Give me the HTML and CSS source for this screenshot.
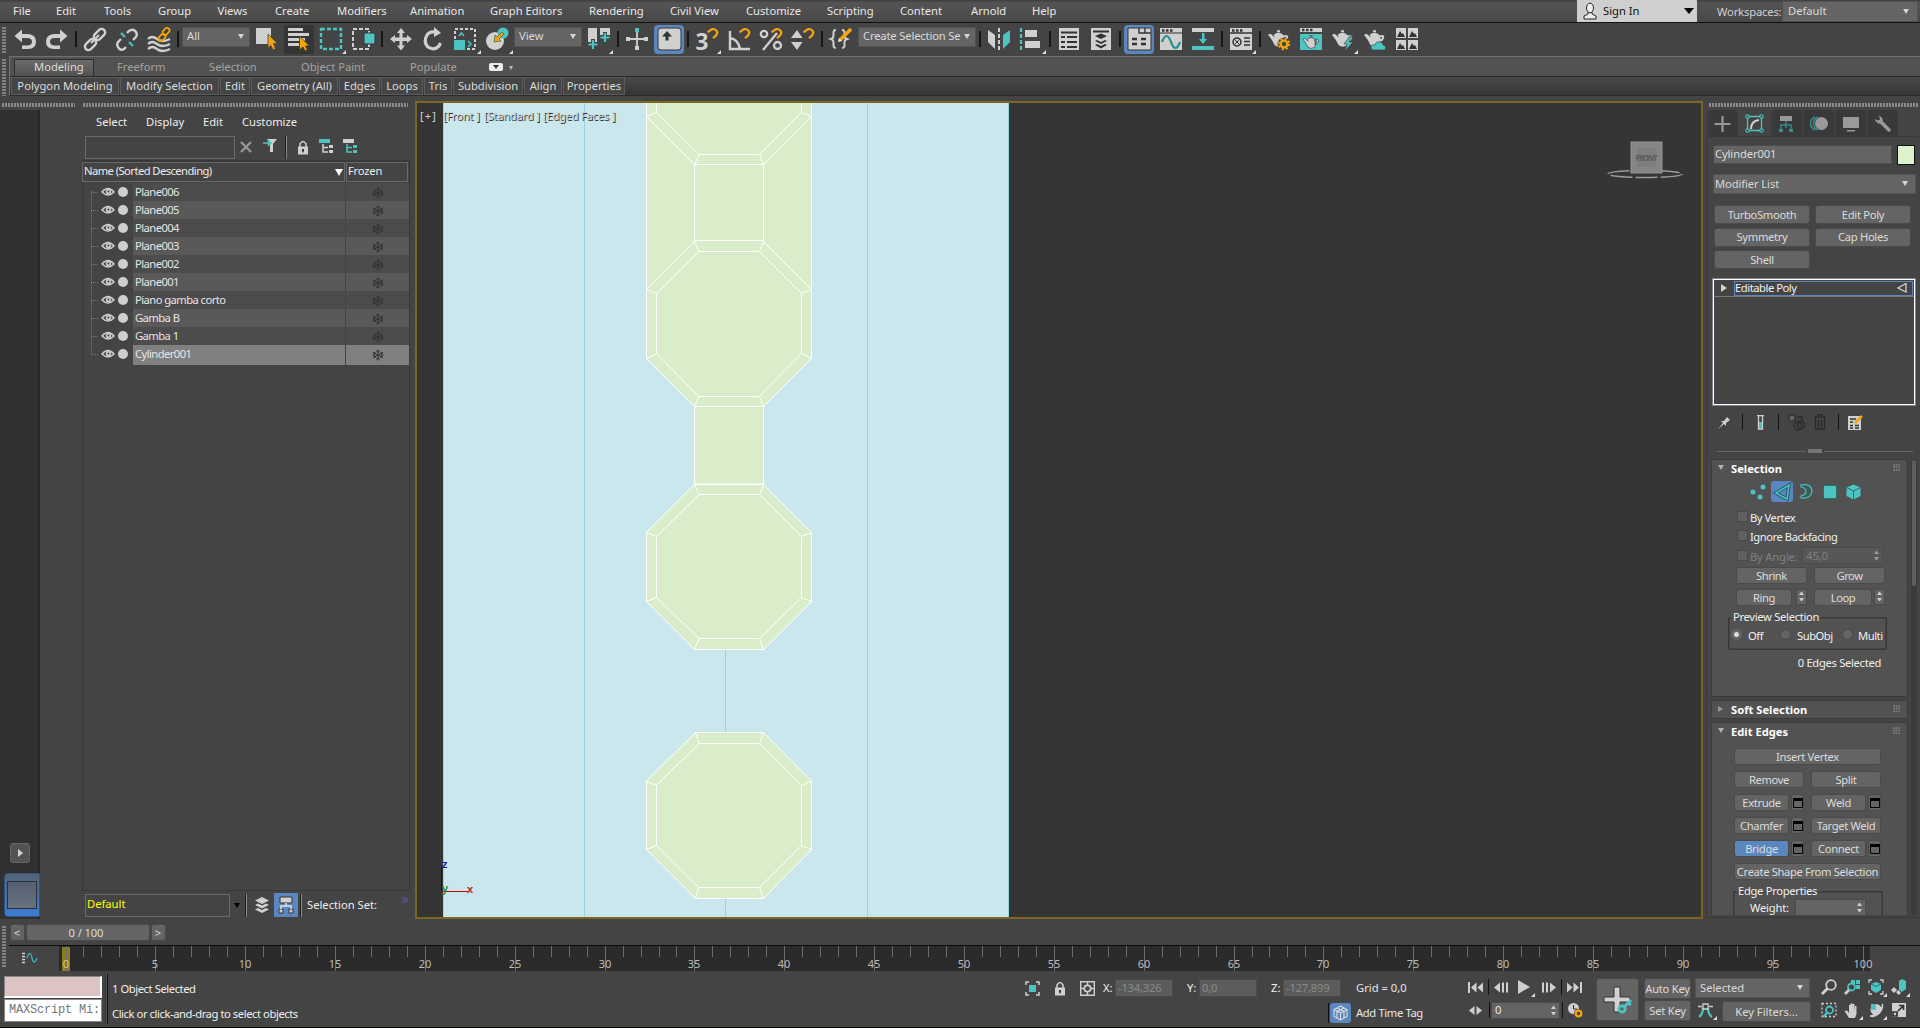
FILE: index.html
```html
<!DOCTYPE html>
<html lang="en">
<head>
<meta charset="utf-8">
<title>3D Modeling</title>
<link rel="stylesheet" href="styles.css">
</head>
<body>
<svg class="defs" width="0" height="0">
  <defs>
    <symbol id="eye" viewBox="0 0 14 10"><path d="M1 5Q7-2 13 5Q7 11 1 5Z" fill="none" stroke="#cfcfcf" stroke-width="1.5"/><circle cx="7.5" cy="4.8" r="2.7" fill="#cfcfcf"/><circle cx="7.5" cy="4.5" r="1.1" fill="#444"/></symbol>
    <symbol id="flake" viewBox="0 0 12 12"><path d="M6 .5V11.5M1 3.2L11 8.8M1 8.8L11 3.2M4 1.5L6 3.2L8 1.5M4 10.5L6 8.8L8 10.5M.8 5.3H3L3 3M11.200 5.300H9V3M.8 6.800H3V9M11.200 6.800H9V9" fill="none" stroke="#333" stroke-width="1"/></symbol>
    <symbol id="magnet" viewBox="0 0 12 12"><path d="M1.500 4.500L4 2.500C8-.5 12.500 4 9 7.500L6.500 10" fill="none" stroke="#f5a50c" stroke-width="2"/></symbol>
    <symbol id="pot" viewBox="0 0 24 24"><path d="M7 8Q12 4 17 8Q20 13 17 19Q12 22 8 19Q6 14 1 8L4 7L8 11ZM10.500 3.500h3v2h-3zM17 9Q23 7 22 12Q20 16 17 15V13Q20 13 20 10.500Q19 10 17 11Z" fill="#d0d0d0"/></symbol>
    <symbol id="lock" viewBox="0 0 10 15"><path d="M2 7V4Q5-1 8 4V7" fill="none" stroke="#cfcfcf" stroke-width="1.500"/><path d="M0 6.500H10V14.500H0Z" fill="#cfcfcf"/><path d="M4 9h2v1.500l-.5 2h-1l-.5-2z" fill="#333"/></symbol>
    <symbol id="win" viewBox="0 0 12 12"><path d="M1.500 1.500h9v9h-9z" fill="none" stroke="#000"/><path d="M1 1h10v3H1z"/></symbol>
  </defs>
</svg>

<header class="menubar">
  <nav class="menus"><span>File</span><span>Edit</span><span>Tools</span><span>Group</span><span>Views</span><span>Create</span><span>Modifiers</span><span>Animation</span><span>Graph Editors</span><span>Rendering</span><span>Civil View</span><span>Customize</span><span>Scripting</span><span>Content</span><span>Arnold</span><span>Help</span></nav>
  <div class="signin"><svg width="16" height="18" viewBox="0 0 16 18"><path d="M6 10V12L2 14V17H14V14L10 12V10Z" fill="#eee" stroke="#222"/><ellipse cx="8" cy="6" rx="3.500" ry="4.800" fill="#eee" stroke="#222"/></svg><span>Sign In</span><i class="down black"></i></div>
  <span class="ws-label">Workspaces:</span>
  <div class="dd ws">Default<i class="down"></i></div>
</header>

<div class="toolbar">
  <i class="vgrip"></i>
  <svg class="tool" viewBox="0 0 32 32"><path d="M5.500 12L13 5.500V10H19Q27 10.500 27 17.500Q27 25 19 25H13V21.500H18Q23 21.500 23 17.500Q23 14 18 14H13V18.500Z" fill="#d0d0d0"/></svg>
  <svg class="tool" viewBox="0 0 32 32"><path d="M26.500 12L19 5.500V10H13Q5 10.500 5 17.500Q5 25 13 25H19V21.500H14Q9 21.500 9 17.500Q9 14 14 14H19V18.500Z" fill="#d0d0d0"/></svg>
  <i class="sep"></i>
  <svg class="tool" viewBox="0 0 32 32"><g fill="none" stroke="#d0d0d0" stroke-width="2.400"><rect x="14" y="7" width="13" height="7" rx="3.500" transform="rotate(-45 20.500 10.500)"/><rect x="5" y="17" width="13" height="7" rx="3.500" transform="rotate(-45 11.500 20.500)"/></g><path d="M12 19L20 11" stroke="#d0d0d0" stroke-width="2.200"/></svg>
  <svg class="tool" viewBox="0 0 32 32"><g fill="none" stroke="#d0d0d0" stroke-width="2.400"><path d="M16 9L18 7Q22 4 25 8Q27 11 24 14L22 16M15 23L13 25Q9 27 7 23Q5 20 8 17L10 15"/></g><path d="M10 9L14 13M18 18L22 22" stroke="#4bc4c2" stroke-width="2.200"/></svg>
  <svg class="tool" viewBox="0 0 32 32"><path d="M5 15Q9 11 14 15T27 15M5 20Q9 16 14 20T27 20M5 25Q9 21 14 25T27 25" fill="none" stroke="#d0d0d0" stroke-width="2.300"/><g fill="none" stroke="#f5a50c" stroke-width="1.700"><rect x="19" y="5" width="8" height="5" rx="2.500" transform="rotate(-45 23 7.500)"/><rect x="15" y="11" width="8" height="5" rx="2.500" transform="rotate(-45 19 13.500)"/></g></svg>
  <i class="sep"></i>
  <div class="dd all">All<i class="down"></i></div>
  <svg class="tool" viewBox="0 0 32 32"><path d="M5 4H20V20H5Z" fill="#d0d0d0"/><path d="M17 10L26.500 19.500H22.500L24.500 24.500L22 26L20 21.500L17 24Z" fill="#f5a50c" stroke="#444" stroke-width=".8"/></svg>
  <svg class="tool pressed" viewBox="0 0 32 32"><path d="M5 4H20V7H5ZM5 9H26V12H5ZM5 14H22V17H5ZM5 19H17V22H5Z" fill="#d0d0d0"/><path d="M16.500 12L26.500 22H22.500L24.500 26L22 27L20 23L16.500 26Z" fill="#f5a50c" stroke="#353535" stroke-width=".8"/></svg>
  <svg class="tool" viewBox="0 0 32 32"><rect x="6" y="5" width="20" height="20" fill="none" stroke="#4bc4c2" stroke-width="2.400" stroke-dasharray="4 2"/><path d="M31 26V30H27Z" fill="#ddd"/></svg>
  <svg class="tool" viewBox="0 0 32 32"><rect x="6" y="5" width="16" height="20" fill="none" stroke="#d0d0d0" stroke-width="2" stroke-dasharray="4 2"/><path d="M17 9H28V20H17Z" fill="#4bc4c2" stroke="#333"/></svg>
  <i class="sep"></i>
  <svg class="tool" viewBox="0 0 32 32"><path d="M16 4L20 9H17.500V13.500H22V11L27 15L22 19V17H17.500V21.500H20L16 26.500L12 21.500H14.500V17H10V19L5 15L10 11V13.500H14.500V9H12Z" fill="#d0d0d0"/></svg>
  <svg class="tool" viewBox="0 0 32 32"><path d="M20 9Q14 6 10 11Q6 18 11 23Q17 27 22 22L23.500 19" fill="none" stroke="#d0d0d0" stroke-width="3.200"/><path d="M17 3L24 9L17 13Z" fill="#d0d0d0"/></svg>
  <svg class="tool" viewBox="0 0 32 32"><rect x="6" y="5" width="20" height="20" fill="none" stroke="#d0d0d0" stroke-width="2" stroke-dasharray="3 2"/><path d="M5 16H16V26H5Z" fill="#4bc4c2"/><path d="M10 12L12.500 9L15 12M19 17L22 20L19 23" fill="none" stroke="#4bc4c2" stroke-width="1.600"/><path d="M32 26V30H28Z" fill="#ddd"/></svg>
  <svg class="tool" viewBox="0 0 32 32"><ellipse cx="14" cy="17" rx="9" ry="9" fill="#d0d0d0"/><circle cx="22" cy="9" r="5.500" fill="#4bc4c2"/><path d="M21 8L23 10L18 15L20 17L13 18L14 11L16 13Z" fill="#f5a50c" stroke="#444" stroke-width=".6"/><path d="M32 26V30H28Z" fill="#ddd"/></svg>
  <div class="dd view">View<i class="down"></i></div>
  <svg class="tool" viewBox="0 0 32 32"><path d="M5 4H14V18H5ZM17 4H27V12H17Z" fill="#d0d0d0"/><path d="M10 15V25M5 20H15M22 8V18M17 13H27" stroke="#444" stroke-width="4"/><path d="M10 16V25M5.500 20.500H14.500M22 9V18M17.500 13.500H26.500" stroke="#4bc4c2" stroke-width="2.200"/><path d="M30 26V30H26Z" fill="#ddd"/></svg>
  <i class="sep"></i>
  <svg class="tool" viewBox="0 0 32 32"><path d="M16 8V26M5 15H27" stroke="#d0d0d0" stroke-width="1.800"/><path d="M5 13h4v4H5zM23 13h4v4h-4zM14 22h4v4h-4z" fill="#d0d0d0"/><path d="M14 4h4v4h-4z" fill="#4bc4c2"/></svg>
  <svg class="tool active" viewBox="1 1 30 29"><rect x="5" y="4" width="23" height="22" rx="3" fill="#d0d0d0" stroke="#333"/><path d="M14 7L19 12.500H15.500V16.500H12.500V12.500H9Z" fill="#333"/></svg>
  <i class="sep"></i>
  <svg class="tool" viewBox="0 0 32 32"><text x="4.500" y="26" font-size="24" font-weight="700" fill="#d0d0d0" textLength="13" lengthAdjust="spacingAndGlyphs">3</text><use href="#magnet" x="15" y="3" width="13" height="14"/><path d="M30 26V30H26Z" fill="#ddd"/></svg>
  <svg class="tool" viewBox="0 0 32 32"><path d="M7 7V25H27M7 14Q15 15 17 25" fill="none" stroke="#d0d0d0" stroke-width="2.400"/><use href="#magnet" x="15" y="3" width="13" height="14"/></svg>
  <svg class="tool" viewBox="0 0 32 32"><g fill="none" stroke="#d0d0d0" stroke-width="2.300"><circle cx="9" cy="10" r="3.200"/><circle cx="22.500" cy="21.500" r="3.500"/><path d="M8 26L22 9"/></g><use href="#magnet" x="15" y="3" width="13" height="14"/></svg>
  <svg class="tool" viewBox="0 0 32 32"><path d="M4 14L10 6L15.500 14ZM4 18H15.500L10 26Z" fill="#d0d0d0"/><use href="#magnet" x="15" y="3" width="13" height="14"/></svg>
  <i class="sep"></i>
  <svg class="tool" viewBox="0 0 32 32"><path d="M11 6Q8 6 8.500 10Q9 14 6 15Q9 16 8.500 20Q8 24 11 24M17 6Q20 6 19.500 10Q19 14 22 15Q19 16 19.500 20Q20 24 17 24" fill="none" stroke="#d0d0d0" stroke-width="2"/><path d="M15 16L26 5" stroke="#f5a50c" stroke-width="3.500"/><path d="M13 18L17 17L14 14Z" fill="#eee"/></svg>
  <div class="dd sel">Create Selection Se<i class="down"></i></div>
  <i class="sep"></i>
  <svg class="tool" viewBox="0 0 32 32"><path d="M5 6L12 11V25L5 18Z" fill="#d0d0d0"/><path d="M27 6L20 11V25L27 18Z" fill="#4bc4c2"/><path d="M16 4V27" stroke="#d0d0d0" stroke-width="2" stroke-dasharray="4 2"/></svg>
  <svg class="tool" viewBox="0 0 32 32"><path d="M6 4V27" stroke="#4bc4c2" stroke-width="2.200" stroke-dasharray="4 2"/><path d="M10 6H22V13H10ZM10 17H25V24H10Z" fill="#d0d0d0"/><path d="M31 26V30H27Z" fill="#ddd"/></svg>
  <i class="sep"></i>
  <svg class="tool" viewBox="0 0 32 32"><path d="M6 4H26V26H6Z" fill="#d0d0d0"/><path d="M8 8.500H24M8 13H12M14 13H24M8 18H12M14 18H24M8 23H12M14 23H24" stroke="#333" stroke-width="2"/></svg>
  <svg class="tool" viewBox="0 0 32 32"><path d="M6 4H26V26H6Z" fill="#d0d0d0"/><path d="M8 7.500H24" stroke="#333" stroke-width="2"/><path d="M10 12L16 9.500L22 12L16 15ZM10 17L12 16L16 18L20 16L22 17L16 20ZM10 21L12 20L16 22L20 20L22 21L16 24.500Z" fill="#333"/></svg>
  <i class="sep"></i>
  <svg class="tool active" viewBox="1 1 30 29"><path d="M5 4H28V26H5Z" fill="#d0d0d0" stroke="#333"/><path d="M16 4V9H28M22 4V9" fill="none" stroke="#333" stroke-width="1.400"/><path d="M9 15H14M18 15H23M9 20H14M18 20H23" fill="none" stroke="#333" stroke-width="2.600"/></svg>
  <svg class="tool" viewBox="0 0 32 32"><path d="M5 4H27V26H5Z" fill="#d0d0d0"/><path d="M5 9H27" stroke="#333"/><path d="M7 6.500h2.500M11 6.500h2.500M15 6.500h2.500" stroke="#333" stroke-width="2.500"/><path d="M7 18C10 10 13 10 16 18S22 26 25 18" fill="none" stroke="#278f8e" stroke-width="2.200"/></svg>
  <svg class="tool" viewBox="0 0 32 32"><path d="M5 4H27V8H5Z" fill="#d0d0d0"/><path d="M5 22H27V26H5ZM15 9H17.500V15H20L16 20L12 15H15Z" fill="#4bc4c2"/></svg>
  <i class="sep"></i>
  <svg class="tool" viewBox="0 0 32 32"><path d="M5 4H27V26H5Z" fill="#d0d0d0"/><path d="M5 9H27M19 14H25M19 17.500H25M19 21H25" stroke="#333" stroke-width="1.300"/><path d="M7 6.500h2.500M11 6.500h2.500M15 6.500h2.500" stroke="#333" stroke-width="2.500"/><circle cx="12" cy="18" r="4" fill="#ccc" stroke="#333" stroke-width="1.500"/><path d="M9 15L15 21M15 15L9 21" stroke="#333"/><path d="M31 26V30H27Z" fill="#ddd"/></svg>
  <i class="sep"></i>
  <svg class="tool" viewBox="0 0 32 32"><use href="#pot" x="4" y="3" width="23" height="23"/><circle cx="21" cy="20" r="6.500" fill="#444"/><circle cx="21" cy="20" r="3.400" fill="none" stroke="#f5a50c" stroke-width="2.400"/><circle cx="21" cy="20" r="5.200" fill="none" stroke="#f5a50c" stroke-width="2" stroke-dasharray="2 2.080"/></svg>
  <svg class="tool" viewBox="0 0 32 32"><path d="M5 4H27V8H5Z" fill="#d0d0d0"/><path d="M5 10H27V26H5Z" fill="#4bc4c2"/><path d="M7 6h2.500M11 6h2.500M15 6h2.500" stroke="#333" stroke-width="2.500"/><g stroke="#333" stroke-width=".8"><use href="#pot" x="6" y="9" width="20" height="18"/></g></svg>
  <svg class="tool" viewBox="0 0 32 32"><use href="#pot" x="4" y="3" width="23" height="23"/><path d="M23 12L17 20H20L18 27L26 18H22L25 12Z" fill="#4bc4c2" stroke="#444" stroke-width=".7"/><path d="M31 26V30H27Z" fill="#ddd"/></svg>
  <svg class="tool" viewBox="0 0 32 32"><use href="#pot" x="4" y="3" width="23" height="23"/><path d="M14 26Q11 25 12 22Q14 20 16 21Q17 17 21 18Q24 18 24 21Q28 22 26 26Z" fill="#4bc4c2" stroke="#444" stroke-width=".7"/></svg>
  <svg class="tool" viewBox="0 0 32 32"><path d="M5 4H15V14H5ZM17 4H27V14H17ZM5 16H15V26H5ZM17 16H27V26H17Z" fill="#d0d0d0"/><path d="M6 13L9 7L11 10L12 9L14 13ZM18 13L21 7L23 10L24 9L26 13ZM6 25L9 19L11 22L12 21L14 25ZM18 25L21 19L23 22L24 21L26 25Z" fill="#333"/></svg>
</div>

<div class="ribbon">
  <i class="vgrip"></i>
  <div class="ribbon-body">
    <div class="tabs"><span class="on">Modeling</span><span>Freeform</span><span>Selection</span><span>Object Paint</span><span>Populate</span><b class="pill"><i class="down"></i></b><i class="down sm"></i></div>
    <div class="panels"><span>Polygon Modeling</span><span>Modify Selection</span><span>Edit</span><span>Geometry (All)</span><span>Edges</span><span>Loops</span><span>Tris</span><span>Subdivision</span><span>Align</span><span>Properties</span></div>
  </div>
</div>

<main class="main">
  <aside class="strip">
    <i class="hgrip"></i>
    <div class="strip-body">
      <b class="strip-play"><i class="right"></i></b>
      <div class="strip-tab"><i></i></div>
    </div>
  </aside>

  <section class="explorer">
    <i class="hgrip"></i>
    <nav class="ex-menu"><span>Select</span><span>Display</span><span>Edit</span><span>Customize</span></nav>
    <div class="ex-tools">
      <div class="search"></div>
      <svg width="12" height="12" viewBox="0 0 12 12"><path d="M1 1L11 11M11 1L1 11" stroke="#999" stroke-width="2.200"/></svg>
      <svg class="filter" width="15" height="15" viewBox="0 0 15 15"><path d="M4 1H14L10 6V14H7V6Z" fill="#cfcfcf"/><path d="M0 5H8M5 2.500L8 5L5 7.500" fill="none" stroke="#4bc4c2" stroke-width="1.700"/></svg>
      <i class="line"></i>
      <svg width="10" height="15"><use href="#lock"/></svg>
      <svg class="tree" width="15" height="15" viewBox="0 0 15 15"><path d="M0 0H11V4H0Z" fill="#4bc4c2"/><path d="M4 5V13H9M4 8.500H9" fill="none" stroke="#cfcfcf" stroke-width="1.500"/><path d="M10 6h4v3h-4zM10 11h4v3h-4z" fill="#cfcfcf"/></svg>
      <svg class="tree" width="15" height="15" viewBox="0 0 15 15"><path d="M0 0H11V4H0Z" fill="#cfcfcf"/><path d="M4 5V13H9M4 8.500H9" fill="none" stroke="#4bc4c2" stroke-width="1.500"/><path d="M10 6h4v3h-4zM10 11h4v3h-4z" fill="#4bc4c2"/></svg>
    </div>
    <div class="ex-list">
      <div class="ex-head"><span>Name (Sorted Descending)<i class="down white"></i></span><span>Frozen</span></div>
      <div class="ex-rows" id="rows"></div>
    </div>
    <div class="ex-foot">
      <div class="combo">Default</div><i class="down black"></i><i class="line"></i>
      <svg width="14" height="16" viewBox="0 0 14 16"><path d="M0 3.500L7 0L14 3.500L7 7ZM0 8L3 6.500L7 8.500L11 6.500L14 8L7 11.500ZM0 12.500L3 11L7 13L11 11L14 12.500L7 16Z" fill="#cfcfcf"/></svg>
      <svg class="hier" width="24" height="24" viewBox="0 0 24 24"><path d="M6 4H18V10H6ZM5 16h4v4H5zM15 16h4v4h-4z" fill="#d0d0d0" stroke="#333"/><path d="M12 10V13M7 16V13H17V16" fill="none" stroke="#e4e4e4" stroke-width="1.500"/></svg>
      <i class="line"></i><span>Selection Set:</span><em>»</em>
    </div>
  </section>

  <section class="viewport">
    <svg class="scene" viewBox="417 103 1284 814" width="1284" height="814">
      <rect x="443" y="103" width="566" height="814" fill="#c9e7ec"/>
      <path d="M443.500 103V917M584.500 103V917M725.500 640V917M867.500 103V917M1008.500 103V917" stroke="#93d5e4" fill="none"/>
      <g fill="#d9edcb" stroke="#fff" stroke-linejoin="round">
        <path d="M646.500 100V358.500L694.500 406.500H763.500L811.500 358.500V100Z"/>
        <path d="M694.500 406.500H763.500V484H694.500Z"/>
        <path fill="none" d="M646.500 116.500L694.500 164.500H763.500L811.500 116.500M656.500 100V112.500L699 154.500H759.500L801.500 112.500V100M646.500 116.500L656.500 112.500M811.500 116.500L801.500 112.500M694.500 164.500L699 154.500M763.500 164.500L759.500 154.500M694.500 164.500V241.500M763.500 164.500V241.500M646.500 289.500L694.500 241.500M763.500 241.500L811.500 289.500M694.500 240.500H763.500"/>
        <path fill="none" d="M699 251.500H759.500L801.500 293.500V353.500L759.500 396.500H699L656.500 353.500V293.500ZM694.500 241.500L699 251.500M763.500 241.500L759.500 251.500M811.500 289.500L801.500 293.500M811.500 358.500L801.500 353.500M763.500 406.500L759.500 396.500M694.500 406.500L699 396.500M646.500 358.500L656.500 353.500M646.500 289.500L656.500 293.500"/>
        <path d="M694.500 484.500H763.500L811.500 532.500V601.500L763.500 649.500H694.500L646.500 601.500V532.500Z"/>
        <path d="M699 494.500H759.500L801.500 536.500V597.500L759.500 638.500H699L656.500 597.500V536.500ZM694.500 484.500L699 494.500M763.500 484.500L759.500 494.500M811.500 532.500L801.500 536.500M811.500 601.500L801.500 597.500M763.500 649.500L759.500 638.500M694.500 649.500L699 638.500M646.500 601.500L656.500 597.500M646.500 532.500L656.500 536.500"/>
        <path d="M695.500 732.500H763.500L811.500 781V849.500L763.500 898.500H695.500L646.500 849.500V781Z"/>
        <path d="M699 743.500H759.500L801.500 785.500V845.500L759.500 887.500H699L656.500 845.500V785.500ZM695.500 732.500L699 743.500M763.500 732.500L759.500 743.500M811.500 781L801.500 785.500M811.500 849.500L801.500 845.500M763.500 898.500L759.500 887.500M695.500 898.500L699 887.500M646.500 849.500L656.500 845.500M646.500 781L656.500 785.500"/>
      </g>
      <path d="M441.500 867V891" stroke="#00b"/><path d="M442 891.500H468" stroke="#c00"/>
      <g font-size="11" font-weight="600"><text x="442" y="868" fill="#11a">z</text><text x="442" y="892" fill="#2a8a2a">y</text><text x="467" y="893" fill="#b22">x</text></g>
      <ellipse cx="1645" cy="174" rx="37" ry="3.500" fill="none" stroke="#9a9a9a" stroke-width="1.500" stroke-dasharray="22 3"/>
      <rect x="1631" y="142" width="31" height="31" fill="#858585" stroke="#949494"/>
      <path d="M1637 148h19v19h-19z" fill="#7c7d80"/>
      <text x="1635.500" y="160.500" font-size="8" font-weight="700" fill="#5b5b5d" textLength="22">FRONT</text>
    </svg>
    <div class="vp-label"><span class="plus">[+]</span><span>[Front ]</span><span>[Standard ]</span><span>[Edged Faces ]</span></div>
  </section>

  <aside class="command">
    <i class="hgrip"></i>
    <div class="cmd-tabs">
      <svg viewBox="0 0 31 26"><path d="M15.500 6V22M7.500 14H23.500" stroke="#999" stroke-width="2.200"/></svg>
      <svg class="on" viewBox="0 0 31 26"><path d="M8.500 6.500H22.500V20.500H8.500Z" fill="none" stroke="#4bc4c2" stroke-width="1.300"/><path d="M7 5h3v3H7zM21 5h3v3h-3zM7 19h3v3H7zM21 19h3v3h-3z" fill="#444" stroke="#4bc4c2"/><path d="M12 19Q12 11 20 10" fill="none" stroke="#cfcfcf" stroke-width="2.200"/></svg>
      <svg viewBox="0 0 31 26"><path d="M9 6H21V11H9Z" fill="#999"/><path d="M15 11V15M10 19V15H20V19M15 15V18" fill="none" stroke="#358d8c" stroke-width="1.400"/><path d="M8 19h4v3H8zM18 19h4v3h-4z" fill="#358d8c"/></svg>
      <svg viewBox="0 0 31 26"><path d="M12 7A7 7 0 0 0 12 20M15 7A7 7 0 0 0 15 20" fill="none" stroke="#358d8c" stroke-width="1.500"/><circle cx="18.500" cy="13.500" r="6.500" fill="#999"/></svg>
      <svg viewBox="0 0 31 26"><path d="M8 7H24V18H8ZM12 20H20V21.500H12Z" fill="#999"/></svg>
      <svg viewBox="0 0 31 26"><path d="M14 12L22 20" stroke="#999" stroke-width="3.500" stroke-linecap="round"/><path d="M7.500 9Q10 15 15 13.500Q17.500 8 12 5.500L13 9.500L11 10.500Z" fill="#999"/></svg>
    </div>
    <div class="cmd-body">
      <div class="name-row"><div class="field name">Cylinder001</div><i class="swatch"></i></div>
      <div class="dd modlist">Modifier List<i class="down"></i></div>
      <div class="mods"><b class="btn">TurboSmooth</b><b class="btn">Edit Poly</b><b class="btn">Symmetry</b><b class="btn">Cap Holes</b><b class="btn">Shell</b></div>
      <div class="stack"><div class="stack-row"><i class="right"></i><span>Editable Poly<svg width="10" height="10" viewBox="0 0 10 10"><path d="M9 .5V9L1 5Z" fill="none" stroke="#cfcfcf" stroke-width="1.300"/></svg></span></div></div>
      <div class="stack-tools">
        <svg width="13" height="13" viewBox="0 0 13 13"><path d="M0 13L5 7L3 5L6 5L9 1L12 4L8 7V10L6 8Z" fill="#cfcfcf"/></svg><i></i>
        <svg width="7" height="15" viewBox="0 0 7 15"><path d="M0 .7H7M1.500 1V14H5.500V1" fill="none" stroke="#cfcfcf" stroke-width="1.300"/><path d="M2 7H5V13H2Z" fill="#4bc4c2"/></svg><i></i>
        <svg width="17" height="17" viewBox="0 0 17 17"><g fill="none" stroke="#2b2b2b" stroke-width="1.300"><circle cx="4" cy="4" r="3.200" fill="#666"/><circle cx="10" cy="12" r="4"/><circle cx="13" cy="11" r="3.500"/><path d="M9 3H14V8"/></g></svg>
        <svg width="12" height="16" viewBox="0 0 12 16"><path d="M0 3H12M4 2V.7H8V2M1.500 4V15H10.500V4M4.500 6V13M7.500 6V13" fill="none" stroke="#2b2b2b" stroke-width="1.400"/></svg><i></i>
        <svg width="15" height="15" viewBox="0 0 15 15"><path d="M0 1H13V15H0Z" fill="#cfcfcf"/><path d="M2 4H8M2 7h3M2 10.500h3M7 10.500h4M2 13h3M7 13h4" stroke="#333" stroke-width="1.400"/><path d="M7 8L14 1" stroke="#f5a50c" stroke-width="2.500"/></svg>
      </div>
      <div class="splitter"><i></i><b></b><i></i></div>
      <div class="rolls">
        <div class="roll-col">
          <section class="roll selection">
            <h3><i class="down"></i>Selection<b class="dots"></b></h3>
            <div class="sub">
              <svg width="17" height="17" viewBox="0 0 17 17"><circle cx="3" cy="9" r="2.500" fill="#4bc4c2"/><circle cx="10" cy="14" r="2.500" fill="#4bc4c2"/><circle cx="13" cy="4" r="2.500" fill="#4bc4c2"/></svg>
              <svg class="on" width="22" height="21" viewBox="0 0 22 21"><path d="M5 12L18 4L16 18Z" fill="none" stroke="#245a70" stroke-width="3.500"/><path d="M5 12L18 4L16 18Z" fill="none" stroke="#4bc4c2" stroke-width="1.500"/></svg>
              <svg width="13" height="15" viewBox="0 0 13 15"><path d="M1 1Q11-1 12 7Q11 15 1 14V12Q6 11 6 7Q6 4 1 3Z" fill="#3a5c5c" stroke="#4bc4c2" stroke-width="1.200"/></svg>
              <svg width="14" height="14" viewBox="0 0 14 14"><path d="M.5 .5h13v13H.5z" fill="#4bc4c2" stroke="#2b6f70"/></svg>
              <svg width="15" height="16" viewBox="0 0 15 16"><path d="M7.500 .5L14.500 3.500V12L7.500 15.500L.5 12V3.500Z" fill="#4bc4c2"/><path d="M.5 3.500L7.500 7L14.500 3.500M7.500 7V15.500" fill="none" stroke="#2b6f70"/></svg>
            </div>
            <div class="check"><i></i>By Vertex</div>
            <div class="check"><i></i>Ignore Backfacing</div>
            <div class="check off"><i></i><span>By Angle:</span><div class="field">45,0<b class="spin"></b></div></div>
            <div class="pair"><b class="btn w70">Shrink</b><b class="btn w70">Grow</b></div>
            <div class="pair"><b class="btn w55">Ring</b><b class="spinbox"><b class="spin"></b></b><b class="btn w57">Loop</b><b class="spinbox"><b class="spin"></b></b></div>
            <fieldset class="preview"><legend>Preview Selection</legend><span class="radio on"><i></i>Off</span><span class="radio"><i></i>SubObj</span><span class="radio"><i></i>Multi</span></fieldset>
            <p class="count">0 Edges Selected</p>
          </section>
          <section class="roll soft"><h3><i class="right"></i>Soft Selection<b class="dots"></b></h3></section>
          <section class="roll edges">
            <h3><i class="down"></i>Edit Edges<b class="dots"></b></h3>
            <div class="edge-grid">
              <b class="btn full">Insert Vertex</b>
              <b class="btn left">Remove</b><b class="btn rest">Split</b>
              <b class="btn">Extrude</b><b class="btn"><svg width="12" height="12"><use href="#win"/></svg></b><b class="btn col4">Weld</b><b class="btn"><svg width="12" height="12"><use href="#win"/></svg></b>
              <b class="btn">Chamfer</b><b class="btn"><svg width="12" height="12"><use href="#win"/></svg></b><b class="btn rest">Target Weld</b>
              <b class="btn blue">Bridge</b><b class="btn"><svg width="12" height="12"><use href="#win"/></svg></b><b class="btn col4">Connect</b><b class="btn"><svg width="12" height="12"><use href="#win"/></svg></b>
              <b class="btn full">Create Shape From Selection</b>
            </div>
            <fieldset class="props"><legend>Edge Properties</legend><span>Weight:</span><div class="field"><b class="spin"></b></div></fieldset>
          </section>
        </div>
        <div class="scroll"><i></i></div>
      </div>
    </div>
  </aside>
</main>

<section class="time">
  <i class="vgrip"></i>
  <div class="time-body">
    <div class="slider"><b class="btn">&lt;</b><b class="btn thumb">0 / 100</b><b class="btn">&gt;</b></div>
    <div class="track">
      <div class="track-ico"><svg width="16" height="12" viewBox="0 0 16 12"><path d="M0 1.500h3M0 4.500h3M0 7.500h3M0 10.500h3" stroke="#cfcfcf" stroke-width="1.300"/><path d="M5 6Q8-3 10 6Q12 14 15 6" fill="none" stroke="#3ea9a7" stroke-width="1.500"/></svg></div>
      <svg class="ruler" id="ruler" width="1811" height="25"></svg>
    </div>
  </div>
</section>

<footer class="status">
  <div class="script"><div class="pink"></div><div class="mini-l">MAXScript Mi:</div></div>
  <i class="bar"></i>
  <div class="msgs"><span>1 Object Selected</span><span>Click or click-and-drag to select objects</span></div>
  <div class="coords">
    <div class="crow">
      <svg width="15" height="15" viewBox="0 0 15 15"><path d="M1 4V1H4M11 1H14V4M14 11V14H11M4 14H1V11" fill="none" stroke="#cfcfcf" stroke-width="1.500"/><path d="M4 4h7v7H4z" fill="#4bc4c2"/></svg>
      <svg width="10" height="15"><use href="#lock"/></svg>
      <svg width="15" height="15" viewBox="0 0 15 15"><path d="M.7 .7H14.300V14.300H.7ZM7.500 0V4M7.500 11V15M0 7.500H4M11 7.500H15" fill="none" stroke="#cfcfcf" stroke-width="1.400"/><circle cx="7.500" cy="7.500" r="3.200" fill="none" stroke="#cfcfcf" stroke-width="1.800"/></svg>
      <label>X:</label><div class="field">-134,326</div><label>Y:</label><div class="field">0,0</div><label>Z:</label><div class="field">-127,899</div><span>Grid = 0,0</span>
    </div>
    <div class="tag"><svg width="21" height="20" viewBox="0 0 21 20"><path d="M10.500 3L17 6.500V13.500L10.500 17L4 13.500V6.500ZM4 6.500L10.500 10L17 6.500M10.500 10V17M7 5L14 8.500V15M14 5L7 8.500V15" fill="none" stroke="#ddd" stroke-width="1.100"/></svg><span>Add Time Tag</span></div>
  </div>
  <div class="play">
    <div class="prow">
      <svg width="15" height="11" viewBox="0 0 15 11"><path d="M0 0H2V11H0ZM8.500 .5V10.500L3 5.500ZM15 .5V10.500L9.500 5.500Z" fill="#cfcfcf"/></svg><i></i>
      <svg width="15" height="11" viewBox="0 0 15 11"><path d="M6 .5V10.500L0 5.500ZM8 .5H10V10.500H8ZM12 .5H14V10.500H12Z" fill="#cfcfcf"/></svg>
      <svg class="pl" width="18" height="20" viewBox="0 0 18 20"><path d="M0 3L12 10L0 17Z" fill="#cfcfcf"/><path d="M17 16V20H13Z" fill="#ddd"/></svg>
      <svg width="15" height="11" viewBox="0 0 15 11"><path d="M9 .5V10.500L15 5.500ZM1 .5H3V10.500H1ZM5 .5H7V10.500H5Z" fill="#cfcfcf"/></svg><i></i>
      <svg width="15" height="11" viewBox="0 0 15 11"><path d="M13 0H15V11H13ZM6.500 .5V10.500L12 5.500ZM0 .5V10.500L5.500 5.500Z" fill="#cfcfcf"/></svg>
    </div>
    <div class="prow two">
      <svg width="13" height="9" viewBox="0 0 13 9"><path d="M5.500 0V9L0 4.500ZM7.500 0V9L13 4.500Z" fill="#cfcfcf"/></svg><i></i>
      <div class="field">0<b class="spin"></b></div><i></i>
      <svg width="15" height="15" viewBox="0 0 15 15"><circle cx="5.500" cy="5.500" r="5.500" fill="#cfcfcf"/><path d="M5.500 2V6H9" fill="none" stroke="#333"/><circle cx="10.500" cy="10.500" r="4.500" fill="#444"/><circle cx="10.500" cy="10.500" r="2.800" fill="none" stroke="#f5a50c" stroke-width="2.200"/></svg>
    </div>
  </div>
  <b class="btn bigkey"><svg width="42" height="42" viewBox="0 0 42 42"><path d="M17 8H23V18H33V23H23V33H17V23H7V18H17Z" fill="#d0d0d0" stroke="#333"/><circle cx="25" cy="30" r="3.200" fill="none" stroke="#4bc4c2" stroke-width="2.800"/><path d="M27 28L34 21M31 24L34 26" stroke="#4bc4c2" stroke-width="2.800"/></svg></b>
  <div class="keys"><b class="btn">Auto Key</b><b class="btn">Set Key</b></div>
  <div class="keysel">
    <div class="dd">Selected<i class="down"></i></div>
    <div class="kf"><svg width="20" height="18" viewBox="0 0 20 18"><path d="M1 15Q5 12 5 6M14 15Q10 12 10 6" fill="none" stroke="#4bc4c2" stroke-width="2.200"/><path d="M5 2h5v5H5zM0 4.500h4M11 4.500h4" fill="none" stroke="#cfcfcf" stroke-width="1.300"/><path d="M19 14V18H15Z" fill="#ddd"/></svg><b class="btn">Key Filters...</b></div>
  </div>
  <div class="navs">
    <svg viewBox="0 0 20 20"><circle cx="11" cy="7" r="4.800" fill="none" stroke="#cfcfcf" stroke-width="1.800"/><path d="M7.500 10.500L2 16" stroke="#cfcfcf" stroke-width="3"/></svg>
    <svg viewBox="0 0 20 20"><path d="M8 2h4v4H8zM13 2h4v4h-4zM13 7h4v4h-4z" fill="#4bc4c2"/><circle cx="8.500" cy="9" r="3.500" fill="#444" stroke="#4bc4c2" stroke-width="1.800"/><path d="M6 12L2 16" stroke="#cfcfcf" stroke-width="2.600"/></svg>
    <svg viewBox="0 0 20 20"><path d="M2 5V2H5M13 2H16V5M16 13V16H13M5 16H2V13" fill="none" stroke="#cfcfcf" stroke-width="1.300"/><path d="M9 4L14 6V12L9 15L4 12V6Z" fill="#4bc4c2"/><path d="M4 6L9 8.500L14 6" fill="none" stroke="#26706f"/><path d="M20 15V19H16Z" fill="#ddd"/></svg>
    <svg viewBox="0 0 20 20"><path d="M12 1L16 3V11L12 14L9 12V3Z" fill="#4bc4c2"/><path d="M1 12L4 9L7 12L4 15ZM6 14L8.500 12L11 15L8.500 17Z" fill="#cfcfcf"/><path d="M20 15V19H16Z" fill="#ddd"/></svg>
    <svg viewBox="0 0 20 20"><path d="M2 2.500H16V15.500H2Z" fill="none" stroke="#cfcfcf" stroke-width="1.300" stroke-dasharray="2 2"/><circle cx="9.500" cy="9" r="3.500" fill="#444" stroke="#4bc4c2" stroke-width="1.800"/><path d="M7 12L3 16" stroke="#4bc4c2" stroke-width="2.400"/></svg>
    <svg viewBox="0 0 20 20"><path d="M6 17L1.500 10L4 9.500L6 12V4H7.500V9V2.500H9.500V9V3H11.500V9.500L12 5H13.500V13L12 17Z" fill="#cfcfcf"/><path d="M20 15V19H16Z" fill="#ddd"/></svg>
    <svg viewBox="0 0 20 20"><circle cx="9" cy="8.500" r="5.500" fill="#cfcfcf"/><path d="M4 3H9V9H4Z" fill="#4bc4c2"/><path d="M3 15Q7 15 12 10T15 3Q17 7 12 12T3 15" fill="#444" stroke="#cfcfcf" stroke-width="1.300"/><path d="M20 15V19H16Z" fill="#ddd"/></svg>
    <svg viewBox="0 0 20 20"><path d="M2 2H16V16H2Z" fill="#d0d0d0"/><path d="M3 15V11H7V15ZM8 10L13 5M9 4.500H13.500V9" fill="none" stroke="#333" stroke-width="1.700"/></svg>
  </div>
</footer>
<script src="app.js"></script>
</body>
</html>
```

FILE: styles.css
```css
* { box-sizing: border-box; }
body { margin: 0; width: 1920px; height: 1028px; overflow: hidden; background: #444; color: #e8e8e8; font: 11.2px/14px "Noto Sans", "Open Sans", sans-serif; display: flex; flex-direction: column; border-bottom: 1px solid #0b0906; white-space: nowrap; }
i, em { font-style: normal; }
b { font-weight: 400; }
svg { display: block; flex: none; }
.defs { position: absolute; }

.down, .right { display: block; flex: none; width: 0; height: 0; border: 3px solid transparent; }
.down { border-top: 5px solid #d4d4d4; border-bottom: 0; }
.right { border-left: 5px solid #d4d4d4; border-right: 0; }
.down.black { border-top-color: #000; }
.down.white { border-top: 7px solid #fff; border-left-width: 4px; border-right-width: 4px; }
.down.sm { border-top-color: #bbb; border-left-width: 2px; border-right-width: 2px; border-top-width: 4px; }
.vgrip { flex: none; width: 4px; margin-left: 2px; background: radial-gradient(circle at 1px 1px, #999 .6px, transparent 1px) 0 0 / 2px 3px; }
.hgrip { flex: none; height: 4px; background: radial-gradient(circle at 1px 1px, #a4a4a4 .6px, transparent 1px) 0 0 / 3px 2px; }
.dd { display: flex; align-items: center; justify-content: space-between; background: #646464; border: 1px solid #525252; color: #dadada; padding: 0 5px 1px; flex: none; }
.field { background: #5c5c5c; border: 1px solid #4b4b4b; flex: none; }
.btn { display: flex; align-items: center; justify-content: center; background: #646464; border: 1px solid #4a4a4a; border-radius: 3px; color: #dcdcdc; flex: none; }
.spin { display: block; width: 5px; height: 9px; }
.spin::before, .spin::after { content: ""; display: block; border: 2.500px solid transparent; }
.spin::before { border-top: 0; border-bottom: 3px solid #ccc; margin-bottom: 3px; }
.spin::after { border-bottom: 0; border-top: 3px solid #ccc; }

.menubar { height: 23px; flex: none; display: flex; background: linear-gradient(#3e3e3e 0, #545454 3px, #474747 22px); border-bottom: 1px solid #111; }
.menus { display: grid; grid-template-columns: 43px 48px 54px 59.500px 57.500px 62px 73px 80px 99px 81px 76px 81px 73px 71px 61px 100px; padding: 3.500px 0 0 13px; flex: 1; }
.signin { width: 120px; background: #cfcfcf; color: #111; display: flex; align-items: center; padding: 0 3px 0 5px; margin-right: 20px; }
.signin span { margin-left: 5px; flex: 1; }
.signin .down { border-top: 6px solid #000; border-left-width: 5px; border-right-width: 5px; }
.ws-label { width: 65px; padding-top: 5px; color: #d0d0d0; letter-spacing: -.15px; }
.ws { width: 136px; height: 21px; margin: 1px 2px 0 0; padding-right: 8px; }

.toolbar { height: 33px; flex: none; display: flex; padding-top: 1px; }
.toolbar .vgrip { margin: 3px 3px 2px 2px; }
.tool { width: 32px; height: 32px; }
.tool.pressed { background: linear-gradient(#353535, #353535) center 1px / 30px 29px no-repeat; }
.tool.active { background: #5b87c0; border-radius: 4px; width: 30px; height: 29px; margin: 1px; }
.sep { flex: none; width: 2px; height: 16px; margin: 7px 2px 0; background: #161616; }
.toolbar .dd { height: 20px; margin: 3px 1px 0; padding-left: 4px; padding-bottom: 2px; }
.all, .view { width: 68px; } .sel { width: 118px; letter-spacing: -.15px; }

.ribbon { height: 40px; flex: none; display: flex; }
.ribbon .vgrip { margin: 3px 3px 0 2px; }
.ribbon-body { flex: 1; border-top: 1px solid #707070; border-left: 1px solid #707070; border-bottom: 1px solid #2b2b2b; background: #525252; }
.tabs { height: 20px; display: grid; grid-template-columns: 103px 92px 92px 109px 79px 20px 10px; border-bottom: 1px solid #2a2a2a; padding-left: 4px; color: #a2a2a2; }
.tabs span { padding-top: 3px; }
.tabs .on { width: 80px; margin-top: 2px; padding: 0 0 0 19px; color: #ddd; background: linear-gradient(#6b6b6b, #525252); border: 1px solid #2d2d2d; border-bottom: 0; }
.pill { width: 14px; height: 8px; margin-top: 6px; background: #ececec; border-radius: 2px; padding: 2px 4px; }
.pill .down { border-top-color: #333; border-top-width: 4px; }
.tabs > .sm { margin-top: 9px; }
.panels { height: 18px; display: grid; grid-template-columns: 109px 100px 31px 88px 42px 43px 29px 71px 39px 63px; background: linear-gradient(#494949, #353535); padding-left: 1px; }
.panels span { border: 1px solid #5b5b5b; margin-right: 1px; text-align: center; color: #dcdcdc; line-height: 15px; background: #454545; }

.main { height: 823px; flex: none; display: flex; }
.strip { width: 82px; padding-top: 7px; display: flex; flex-direction: column; }
.strip .hgrip { margin: 0 7px 3px 2px; }
.strip-body { width: 40px; flex: 1; background: linear-gradient(90deg, #303030 37px, #242424); display: flex; flex-direction: column; justify-content: flex-end; }
.strip-play { width: 20px; height: 20px; margin: 0 0 10px 10px; background: #535353; border: 1px solid #666; border-radius: 3px; padding: 5px 7px; }
.strip-play .right { border-width: 4px; border-right: 0; border-left-width: 5px; }
.strip-tab { height: 44px; margin: 0 0 2px 4px; padding: 7px 3px; background: linear-gradient(#536377, #3c7bd6); border: 1px solid #305583; border-radius: 4px 0 0 4px; }
.strip-tab i { display: block; width: 30px; height: 28px; margin-left: -1px; background: linear-gradient(#566071, #67717f); border: 1px solid #28303a; }
.explorer { width: 329px; padding-top: 7px; display: flex; flex-direction: column; }
.explorer .hgrip { margin: 0 3px 0 1px; }
.ex-menu { display: grid; grid-template-columns: 50px 57px 39px 60px; padding: 8px 0 6px 14px; color: #eee; }
.ex-tools { height: 25px; display: flex; align-items: center; padding-left: 3px; }
.search { width: 150px; height: 23px; border: 1px solid #6a6a6a; margin-right: 5px; }
.filter { margin: 0 7px 4px 11px; }
.ex-tools .line, .ex-foot .line { width: 2px; height: 23px; background: #222; border-right: 1px solid #888; }
.ex-tools .line { margin-right: 11px; }
.tree { margin: 0 0 2px 11px; }
.tree + .tree { margin-left: 9px; }
.ex-list { width: 328px; height: 732px; border: 1px solid #393939; border-top-width: 2px; letter-spacing: -.55px; }
.ex-head { display: grid; grid-template-columns: 264px 63px; margin-left: -1px; color: #eee; height: 20px; }
.ex-head span { border: 1px solid #686868; padding: 1px 1px; display: flex; margin-right: 1px; }
.ex-head span:last-child { letter-spacing: -.2px; }
.ex-head .down { margin: 5px 0 0 auto; }
.ex-rows { padding: 1px 0 0 7px; position: relative; }
.ex-rows::before { content: ""; position: absolute; left: 8px; top: 9px; width: 1px; height: 163px; border-left: 1px dotted #777; }
.row { height: 18px; display: grid; grid-template-columns: 42px 212px 63px; column-gap: 1px; }
.row .ic { display: flex; align-items: center; }
.row .ic::before { content: ""; width: 7px; margin: 0 3px 0 1px; border-top: 1px dotted #777; }
.row .ic b { width: 10px; height: 10px; border-radius: 5px; background: #cfcfcf; margin-left: 3px; }
.row .ic svg, .row .ic b { position: relative; top: -1px; }
.row span { background: #4c4c4c; padding: 2px; color: #e6e6e6; }
.row .fz { display: flex; justify-content: center; padding: 4px; }
.row:nth-child(even) span { background: #595959; }
.row.cur span { background: #808080 !important; }
.ex-foot { height: 28px; display: flex; align-items: center; padding: 0 0 0 3px; color: #eee; }
.combo { width: 145px; height: 23px; border: 1px solid #6a6a6a; color: #ff0; padding: 2px 1px; margin-right: 4px; }
.ex-foot .line { margin-left: 5px; }
.ex-foot .line + svg { margin: 0 5px 0 8px; }
.hier { background: #5b87c0; }
.ex-foot .hier + .line { margin: 0 5px 0 2px; }
.ex-foot em { margin: -14px 0 0 24px; color: #5a56a0; font-size: 15px; }

.viewport { width: 1288px; height: 818px; margin: 5px 0 0 4px; border: 2px solid #7c6624; background: #353535; position: relative; flex: none; }
.vp-label { position: absolute; left: 3px; top: 6px; display: grid; grid-template-columns: 23px 41px 59px 80px; color: #cdd3d3; text-shadow: 1px 1px 0 #333; font-size: 11px; letter-spacing: -.15px; }
.vp-label .plus { letter-spacing: 1.200px; }

.command { flex: 1; padding: 7px 0 0 3px; display: flex; flex-direction: column; height: 822px; }
.command .hgrip { margin: 0 2px 3px 3px; }
.cmd-tabs { display: flex; gap: 1px; height: 26px; padding-left: 1px; }
.cmd-tabs svg { width: 31px; height: 26px; background: #393939; border-radius: 4px 4px 0 0; }
.cmd-tabs svg.on { background: #444; }
.cmd-body { flex: 1; min-height: 0; border: 1px solid #393939; border-right: 0; border-radius: 3px; padding: 8px 3px 0 6px; display: flex; flex-direction: column; overflow: hidden; letter-spacing: -.45px; }
.name-row { display: flex; gap: 5px; }
.name { width: 179px; height: 19px; background: #646464; padding: 1px 1px; color: #ddd; letter-spacing: -.1px; }
.swatch { width: 18px; height: 20px; background: #dcf2cc; border: 1px solid #111; }
.modlist { height: 20px; margin-top: 9px; padding: 0 7px 1px 1px; width: 203px; letter-spacing: -.1px; }
.mods { display: grid; grid-template-columns: 96px 96px; gap: 3.500px 5px; padding: 11px 0 0 1px; letter-spacing: -.3px; }
.mods .btn { height: 19px; }
.stack { width: 204px; height: 128px; margin: 9px 0 0 -1px; border: 2px solid #fff; outline: 1px solid #7c8490; outline-offset: -1px; flex: none; }
.stack-row { display: flex; align-items: center; padding: 0 1px 0 7px; height: 17px; border-bottom: 1px solid #777; }
.stack-row span { display: flex; justify-content: space-between; align-items: center; width: 180px; height: 15px; margin-left: 7px; border: 1px solid #5b87c0; padding: 0 5px 0 0; color: #f2f2f2; }
.stack-row .right { border-width: 4px; border-right: 0; border-left-width: 6px; }
.stack-tools { display: flex; align-items: center; height: 32px; padding-left: 5px; flex: none; }
.stack-tools i { width: 1px; height: 16px; background: #111; margin: 0 14px 0 11px; }
.stack-tools i:nth-of-type(2) { margin: 0 9px 0 14px; }
.stack-tools i:nth-of-type(3) { margin: 0 9px 0 12px; }
.stack-tools svg + svg { margin-left: 9px; }
.splitter { display: flex; align-items: center; gap: 2px; height: 20px; margin: 3px 0 0 4px; flex: none; }
.splitter i { height: 1px; width: 89px; background: #666; }
.splitter b { width: 14px; height: 4px; background: radial-gradient(circle at 1px 1px, #999 .5px, transparent 1px) 0 0 / 2px 2px; }
.rolls { display: flex; margin-left: -2px; height: 456px; margin-top: -2px; overflow: hidden; flex: none; }
.roll-col { width: 197px; display: flex; flex-direction: column; gap: 3px; }
.roll { background: #525252; border: 1px solid #3b3b3b; border-radius: 3px; padding: 0 6px; flex: none; }
.roll h3 { margin: 0; font-size: 11.200px; font-weight: 700; letter-spacing: 0; color: #fff; display: flex; align-items: center; height: 18px; }
.roll h3 .down, .roll h3 .right { margin-right: 7px; border-top-color: #b0b0b0; margin-bottom: 3px; }
.roll h3 .right { border-color: transparent transparent transparent #999; margin-right: 8px; }
.dots { width: 7px; height: 7px; margin: 0 1px 4px auto; background: radial-gradient(circle at 1px 1px, #999 .5px, transparent .9px) 0 0 / 2.500px 2.500px; }
.selection { height: 238px; } .soft { height: 19px; } .edges { height: 220px; }
.sub { display: flex; align-items: center; height: 27px; padding-left: 32px; }
.sub .on { background: #5b87c0; border-radius: 3px; margin: 0 7px 0 4px; }
.sub svg:nth-child(4) { margin: 0 9px 0 10px; }
.check { display: flex; align-items: center; height: 19px; padding-left: 19px; color: #f0f0f0; }
.sub + .check { margin-top: 3px; }
.check i { width: 11px; height: 11px; background: #606060; border: 1px solid #484848; margin: 0 2px 3px 0; }
.check.off { color: #808080; margin: 1px 0 1px; }
.check.off span { width: 47px; letter-spacing: -.2px; }
.check .field { width: 81px; height: 17px; margin: 0 0 2px 5px; padding: 0 3px; display: flex; align-items: center; justify-content: space-between; background: #575757; letter-spacing: 0; }
.check .spin { opacity: .6; }
.pair { display: flex; padding-left: 18px; margin-bottom: 5px; }
.pair .btn { height: 17px; } .w70 { width: 71px; margin-right: 7px; } .w55 { width: 56px; } .w57 { width: 58px; }
.spinbox { width: 11px; height: 16px; background: #646464; border: 1px solid #4a4a4a; margin: 0 7px 0 4px; padding: 2px; }
.w57 + .spinbox { margin-left: 2px; }
.preview, .props { border: 1px solid #383838; box-shadow: inset 0 0 0 .5px #383838; border-radius: 2px; margin: 0; padding: 0; color: #f0f0f0; }
legend { padding: 0 2px; line-height: 12px; letter-spacing: -.3px; }
.preview { width: 159px; height: 39px; margin: 1px 0 0 10px; display: grid; grid-template-columns: 49px 62px 44px; padding: 6px 0 0 2px; }
.radio { display: flex; align-items: center; height: 14px; }
.radio i { width: 11px; height: 11px; border-radius: 6px; background: #646464; border: 1px solid #494949; margin: 0 6px 3px 0; flex: none; }
.radio:last-child i { margin-right: 5px; }
.radio.on i { border: 3px solid #646464; background: #ddd; }
.count { margin: 6px 20px 0 0; text-align: right; color: #f0f0f0; letter-spacing: -.3px; }
.edge-grid { display: grid; grid-template-columns: 55px 13px 3px 55px 13px; grid-auto-rows: 17px; gap: 6px 2px; padding: 7px 0 0 16px; }
.edge-grid .full { grid-column: 1 / 6; }
.edge-grid .left { grid-column: 1 / 3; }
.edge-grid .rest { grid-column: 4 / 6; }
.edge-grid .col4 { grid-column-start: 4; }
.edge-grid .btn { letter-spacing: -.35px; }
.blue { background: #5b87c0; }
.props { margin: 5px 0 0 15px; width: 150px; height: 60px; display: flex; padding-left: 16px; }
.props legend { margin-left: -14px; }
.props span { margin: 4px 6px 0 0; letter-spacing: -.2px; }
.props .field { width: 71px; height: 17px; background: #646464; margin-top: 2px; padding: 3px; display: flex; justify-content: flex-end; }
.scroll { width: 6px; margin-left: 3px; background: #3b3b3b; border-radius: 3px; }
.scroll i { display: block; height: 128px; background: #5e5e5e; border-radius: 3px; border: 1px solid #3b3b3b; }

.time { height: 52px; flex: none; display: flex; }
.time .vgrip { margin: 7px 3px 3px 2px; }
.time-body { flex: 1; display: flex; flex-direction: column; justify-content: flex-end; }
.slider { display: flex; gap: 1px; height: 21px; padding-left: 1px; }
.slider .btn { width: 15px; height: 17px; padding-right: 1px; letter-spacing: -.1px; }
.slider .thumb { width: 124px; padding-right: 4px; }
.track { height: 26px; border-top: 1px solid #0c0c0c; display: flex; }
.track-ico { width: 50px; padding: 6px 13px; }
.ruler { background: #2a2a2a; height: 25px; overflow: visible; }

.status { height: 56px; flex: none; display: flex; padding-top: 5px; }
.script { width: 98px; margin-left: 4px; }
.pink { height: 22px; background: #dcc4c4; border: 1px solid #888; border-right: 2px solid #fff; border-bottom: 2px solid #fff; }
.mini-l { height: 23px; margin-top: 1px; background: #fff; border: 1px solid #888; color: #777; font: 12px/17px "Liberation Mono", monospace; letter-spacing: -.2px; padding: 2px 0 0 4px; }
.bar { width: 3px; height: 50px; margin: -2px 0 0 3px; background: #555; border-right: 1px solid #111; border-left: 1px solid #333; }
.msgs { width: 917px; padding: 6px 0 0 4px; display: flex; flex-direction: column; gap: 11px; color: #f0f0f0; letter-spacing: -.42px; }
.coords { width: 443px; }
.crow { display: flex; align-items: center; height: 24px; }
.crow svg + svg { margin-left: 15px; }
.crow label { width: 12px; margin-left: 8px; color: #f0f0f0; }
.crow .field + label { margin-left: 14px; }
.crow .field { width: 58px; height: 18px; padding: 1px 2px; color: #8a8a8a; letter-spacing: -.2px; }
.crow span { margin-left: 15px; }
.tag { display: flex; align-items: center; gap: 5px; margin: 3px 0 0 303px; border-left: 1px solid #111; padding-left: 1px; height: 20px; letter-spacing: -.35px; }
.tag svg { background: #5b87c0; border-radius: 3px; }
.play { width: 128px; }
.prow { display: flex; align-items: center; height: 22px; }
.prow i { width: 1px; height: 16px; background: #111; margin: 0 5px; }
.prow .pl { margin: 0 5px 0 9px; }
.prow .field { width: 69px; height: 17px; background: #646464; margin: 0 1px; display: flex; align-items: center; justify-content: space-between; padding: 0 3px; }
.prow.two { padding-left: 1px; height: 24px; }
.prow.two i { margin: 0 0 0 7px; } .prow.two .field + i { margin: 0 5px 0 1px; }
.bigkey { width: 43px; height: 43px; margin: 2px 5px 0 0; }
.keys { width: 51px; padding-top: 2px; display: flex; flex-direction: column; gap: 1px; }
.keys .btn { width: 47px; height: 21px; letter-spacing: -.25px; }
.keysel { width: 125px; padding-top: 2px; }
.keysel .dd { width: 115px; height: 20px; padding-right: 6px; padding-left: 4px; }
.kf { display: flex; gap: 4px; padding: 4px 0 0 3px; }
.kf .btn { width: 89px; height: 21px; margin-top: -1px; }
.navs { display: grid; grid-template-columns: repeat(4, 23.300px); grid-auto-rows: 22.500px; }
.navs svg { width: 20px; height: 20px; margin-top: 2px; }
```

FILE: app.js
```js
const names = ["Plane006", "Plane005", "Plane004", "Plane003", "Plane002", "Plane001", "Piano gamba corto", "Gamba B", "Gamba 1", "Cylinder001"];
document.getElementById("rows").innerHTML = names.map((n, i) =>
  `<div class="row${i === names.length - 1 ? " cur" : ""}"><div class="ic"><svg width="14" height="10"><use href="#eye"/></svg><b></b></div><span>${n}</span><span class="fz"><svg width="12" height="12"><use href="#flake"/></svg></span></div>`
).join("");

// frame ruler: one tick per frame, a label every five frames
let out = '<rect x="3" y="1" width="8" height="24" fill="#8a7f1d"/>';
for (let f = 0; f <= 100; f++) {
  const x = Math.floor(7 + f * 17.97) + 0.5;
  const major = f % 5 === 0;
  out += `<path d="M${x} 0V${major ? 25 : 11}" stroke="#6c6c6c"/>`;
  if (major) out += `<text x="${x - 0.5}" y="22" text-anchor="middle" font-size="11" fill="${f ? "#bdbdbd" : "#d8d060"}">${f}</text>`;
}
document.getElementById("ruler").innerHTML = out;
```
